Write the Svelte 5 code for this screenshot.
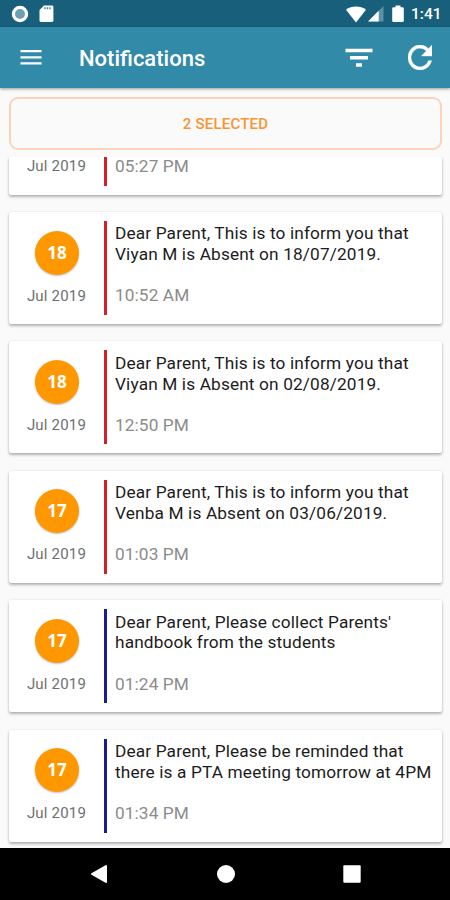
<script lang="ts">
	type Notice = {
		day?: string;
		month: string;
		message?: string;
		time: string;
		kind: 'absence' | 'general';
	};

	// The first card is scrolled under the button, only its last row is left
	const notices: Notice[] = [
		{
			month: 'Jul 2019',
			time: '05:27 PM',
			kind: 'absence'
		},
		{
			day: '18',
			month: 'Jul 2019',
			message: 'Dear Parent, This is to inform you that Viyan M is Absent on 18/07/2019.',
			time: '10:52 AM',
			kind: 'absence'
		},
		{
			day: '18',
			month: 'Jul 2019',
			message: 'Dear Parent, This is to inform you that Viyan M is Absent on 02/08/2019.',
			time: '12:50 PM',
			kind: 'absence'
		},
		{
			day: '17',
			month: 'Jul 2019',
			message: 'Dear Parent, This is to inform you that Venba M is Absent on 03/06/2019.',
			time: '01:03 PM',
			kind: 'absence'
		},
		{
			day: '17',
			month: 'Jul 2019',
			message: "Dear Parent, Please collect Parents' handbook from the students",
			time: '01:24 PM',
			kind: 'general'
		},
		{
			day: '17',
			month: 'Jul 2019',
			message: 'Dear Parent, Please be reminded that there is a PTA meeting tomorrow at 4PM',
			time: '01:34 PM',
			kind: 'general'
		}
	];
</script>

<div class="screen">
	<div class="status-bar">
		<svg class="sync" width="18" height="18" viewBox="0 0 18 18">
			<circle cx="9" cy="9" r="6.6" fill="#6c9fb3" stroke="#fff" stroke-width="3.2" />
		</svg>
		<svg class="sd-card" width="15" height="18" viewBox="0 0 15 18">
			<path d="M5 .5h8a1.4 1.4 0 0 1 1.4 1.4v13.7a1.4 1.4 0 0 1-1.4 1.4H1.9A1.4 1.4 0 0 1 .5 15.6V5z" fill="#fff" />
			<path d="M6 2.2v2M8.5 2.2v2M11 2.2v2" stroke="#557f90" stroke-width="1.4" />
		</svg>
		<svg class="wifi" width="20" height="17" viewBox="0 0 20 17">
			<path d="M0 3.7C5.5-.7 14.5-.7 20 3.7L10 16.5z" fill="#fff" />
		</svg>
		<svg class="signal" width="16" height="16" viewBox="0 0 16 16">
			<path d="M15.5 0v15.5H0z" fill="#5d91a6" />
			<path d="M10.7 4.8v10.7H0z" fill="#fff" />
		</svg>
		<svg class="battery" width="12" height="18" viewBox="0 0 12 18">
			<path d="M3.5.5h5v1.7h2a1.3 1.3 0 0 1 1.3 1.3v12.2a1.3 1.3 0 0 1-1.3 1.3h-9A1.3 1.3 0 0 1 .2 15.7V3.5a1.3 1.3 0 0 1 1.3-1.3h2z" fill="#fff" />
		</svg>
		<span class="clock">1:41</span>
	</div>

	<header class="app-bar">
		<button class="icon-button menu" aria-label="Menu">
			<svg width="22" height="16" viewBox="0 0 22 16">
				<path d="M.5 1.2h21M.5 7.4h21M.5 13.4h21" stroke="#fff" stroke-width="2.2" />
			</svg>
		</button>
		<h1>Notifications</h1>
		<button class="icon-button filter" aria-label="Filter">
			<svg width="28" height="20" viewBox="0 0 28 20">
				<path d="M.5 2.5h27M5 9.7h18M11 17h6" stroke="#fff" stroke-width="3.4" />
			</svg>
		</button>
		<button class="icon-button" aria-label="Refresh">
			<svg width="24" height="25" viewBox="4 4 16 16" preserveAspectRatio="none">
				<path
					d="M17.65 6.35A7.96 7.96 0 0 0 12 4a8 8 0 1 0 7.73 10h-2.08A6 6 0 1 1 12 6c1.66 0 3.14.69 4.22 1.78L13 11h7V4z"
					fill="#fff"
					stroke="#fff"
					stroke-width="0.3"
				/>
			</svg>
		</button>
	</header>

	<button class="selected">2 SELECTED</button>

	<main class="list">
		{#each notices as notice}
			<article class="card" class:clipped={!notice.message}>
				<div class="date">
					{#if notice.day}
						<span class="day">{notice.day}</span>
					{/if}
					<span class="month">{notice.month}</span>
				</div>
				<div class="divider {notice.kind}"></div>
				<div class="content">
					{#if notice.message}
						<p class="message">{notice.message}</p>
					{/if}
					<p class="time">{notice.time}</p>
				</div>
			</article>
		{/each}
	</main>

	<nav class="nav-bar">
		<svg width="18" height="20" viewBox="0 0 18 20">
			<path d="M16 2v16L2 10z" fill="#fff" stroke="#fff" stroke-width="2" stroke-linejoin="round" />
		</svg>
		<svg width="18" height="18" viewBox="0 0 18 18">
			<circle cx="9" cy="9" r="9" fill="#fff" />
		</svg>
		<svg width="18" height="18" viewBox="0 0 18 18">
			<rect x=".3" y=".3" width="17.4" height="17.4" rx="1" fill="#fff" />
		</svg>
	</nav>
</div>

<style>
	:global(body) {
		margin: 0;
	}

	.screen {
		display: flex;
		flex-direction: column;
		width: 450px;
		height: 900px;
		overflow: hidden;
		background: #fafafa;
		font-family: Roboto, sans-serif;
	}

	svg {
		display: block;
		flex: none;
	}

	.status-bar {
		flex: none;
		display: flex;
		align-items: center;
		box-sizing: border-box;
		height: 27px;
		padding: 1px 9px 0 11px;
		background: #175f7a;
	}

	.sd-card {
		margin-left: 10px;
	}

	.wifi {
		margin-left: auto;
	}

	.signal {
		margin-left: 2px;
	}

	.battery {
		margin-left: 8px;
	}

	.clock {
		width: 30px;
		margin-left: 7px;
		color: #fff;
		font-size: 15.5px;
		font-weight: 500;
		line-height: 26px;
		white-space: nowrap;
	}

	.app-bar {
		flex: none;
		display: flex;
		align-items: center;
		box-sizing: border-box;
		height: 61px;
		padding: 0 18px 0 20px;
		background: #318aa8;
		box-shadow: 0 1px 3px rgba(0, 0, 0, 0.4);
	}

	.icon-button {
		flex: none;
		padding: 0;
		border: none;
		background: none;
		cursor: pointer;
	}

	h1 {
		flex: 1;
		margin: 2px 0 0 37px;
		color: #fff;
		font-size: 22px;
		font-weight: 500;
		line-height: 28px;
	}

	.filter {
		margin-right: 35px;
	}

	.selected {
		flex: none;
		height: 53px;
		margin: 9px 8px 0 9px;
		padding: 0;
		border: 2px solid #fbd3bb;
		border-radius: 9px;
		background: #fafafa;
		color: #fb9331;
		font-family: inherit;
		font-size: 15px;
		font-weight: 500;
		letter-spacing: 0.2px;
	}

	.list {
		flex: 1;
		display: flex;
		flex-direction: column;
		justify-content: flex-end;
		gap: 17.4px;
		min-height: 0;
		margin-top: 7px;
		padding: 0 8px 6.4px 9px;
		overflow: hidden;
	}

	.card {
		flex: none;
		display: flex;
		box-sizing: border-box;
		height: 112px;
		padding: 9px 8px 9px 0;
		border-radius: 2px;
		background: #fff;
		box-shadow:
			0 2px 3px rgba(0, 0, 0, 0.28),
			0 0 2px rgba(0, 0, 0, 0.12);
	}

	.date {
		display: flex;
		flex-direction: column;
		align-items: center;
		width: 95px;
	}

	.day {
		width: 44px;
		height: 44px;
		margin: 9.6px 0 0 1px;
		border-radius: 50%;
		background: #ff9800;
		box-shadow: 0 1px 2px rgba(0, 0, 0, 0.25);
		color: #fff;
		font-family: 'Open Sans', sans-serif;
		font-size: 17px;
		font-weight: 700;
		line-height: 44px;
		text-align: center;
	}

	.month {
		margin-top: 11px;
		color: #6f6f6f;
		font-size: 15px;
		line-height: 20px;
		letter-spacing: 0.2px;
	}

	.divider {
		width: 3px;
	}

	.absence {
		background: #d0202a;
	}

	.general {
		background: #1c1c8c;
	}

	.content {
		flex: 1;
		padding-left: 8px;
	}

	p {
		margin: 0;
	}

	.message {
		margin-top: 2.4px;
		color: #1c1c1c;
		font-size: 17.25px;
		line-height: 20.7px;
		letter-spacing: 0.14px;
	}

	.time {
		margin-top: 20.6px;
		color: #8b8b8b;
		font-size: 17.25px;
		line-height: 20px;
		letter-spacing: 0.1px;
	}

	.clipped {
		height: 37.4px;
		padding-top: 0;
		border-radius: 0 0 2px 2px;
	}

	.clipped .month,
	.clipped .time {
		margin-top: 0;
		line-height: 18px;
	}

	.nav-bar {
		flex: none;
		display: flex;
		align-items: center;
		justify-content: space-between;
		box-sizing: border-box;
		height: 52px;
		padding: 0 89px 0 90px;
		background: #000;
	}
</style>
